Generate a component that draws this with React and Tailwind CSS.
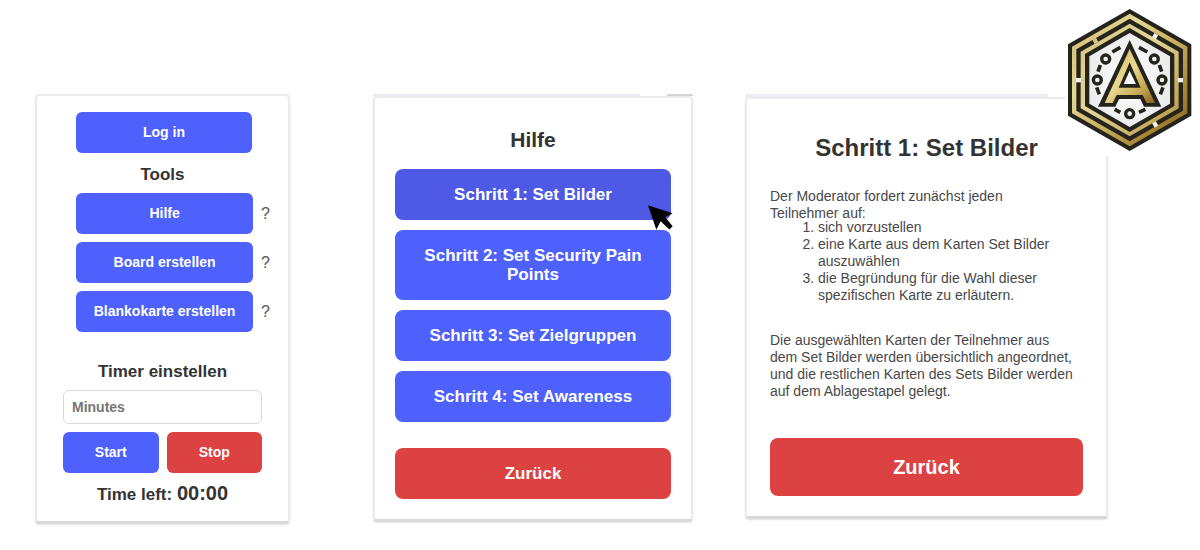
const steps = [
  "Schritt 1: Set Bilder",
  "Schritt 2: Set Security Pain Points",
  "Schritt 3: Set Zielgruppen",
  "Schritt 4: Set Awareness",
];

const tools = ["Hilfe", "Board erstellen", "Blankokarte erstellen"];

function Card({ className, children }) {
  return (
    <section className={`rounded-sm border-2 border-b-[3px] border-[#ebebeb] border-b-[#d9d9d9] bg-white shadow-[0_1px_2px_#e2e2e2] ${className}`}>
      {children}
    </section>
  );
}

function Logo() {
  return (
    <svg viewBox="45 0 405 468" className="absolute top-0 right-0 h-[156px] w-[135px] bg-white" role="img" aria-label="Logo">
      <defs>
        <linearGradient id="gold" x1="0" y1="0" x2="1" y2="1">
          <stop offset="0" stopColor="#c9b36a" />
          <stop offset="0.3" stopColor="#e6d795" />
          <stop offset="0.55" stopColor="#c8b160" />
          <stop offset="0.8" stopColor="#a5812f" />
          <stop offset="1" stopColor="#7d5a1c" />
        </linearGradient>
        <linearGradient id="goldInner" x1="0" y1="0" x2="1" y2="1">
          <stop offset="0" stopColor="#d8c67d" />
          <stop offset="0.45" stopColor="#e3d596" />
          <stop offset="1" stopColor="#b4933f" />
        </linearGradient>
        <linearGradient id="letter" x1="0" y1="0" x2="1" y2="1">
          <stop offset="0" stopColor="#c6ac55" />
          <stop offset="0.45" stopColor="#ead98f" />
          <stop offset="0.75" stopColor="#c4a651" />
          <stop offset="1" stopColor="#85601f" />
        </linearGradient>
        <radialGradient id="plate">
          <stop offset="0" stopColor="#ffffff" />
          <stop offset="1" stopColor="#ececee" />
        </radialGradient>
      </defs>
      {/* nested rings, outside to inside */}
      <polygon points="239,27 424,133 424,347 239,453 54,347 54,133" fill="#25241c" />
      <polygon points="239,41 412,140 412,340 239,439 66,340 66,140" fill="url(#gold)" />
      <polygon points="239,56 399,148 399,332 239,424 79,332 79,148" fill="#25241c" />
      <polygon points="239,71 386,155 386,325 239,409 92,325 92,155" fill="url(#goldInner)" />
      <polygon points="239,84 373,162 373,318 239,396 105,318 105,162" fill="#25241c" />
      <polygon points="239,99 360,169 360,311 239,381 118,311 118,169" fill="url(#plate)" />
      <g fill="#f1f1ee">
        <rect x="78" y="234" width="15" height="13" />
        <rect x="384" y="234" width="15" height="13" />
        <rect x="309" y="101" width="13" height="15" transform="rotate(30 315 108)" />
        <rect x="309" y="366" width="13" height="15" transform="rotate(-30 315 373)" />
        <rect x="129" y="114" width="13" height="16" fill="#d9bd84" transform="rotate(-30 135 122)" />
      </g>
      <g fill="none" stroke="#25241c" strokeWidth="10">
        <circle cx="167" cy="177" r="12" />
        <circle cx="313" cy="177" r="12" />
        <circle cx="142" cy="240" r="12" />
        <circle cx="336" cy="240" r="12" />
        <circle cx="239" cy="341" r="12" />
        <path d="M187 156L211 142M267 142L292 156M151 195L144 215M328 195L335 215M140 262L148 283M339 262L331 283M194 328L211 337M267 337L286 328" strokeWidth="11" />
      </g>
      <path d="M239 120L144 320H196L207 297H271L282 320H334Z" fill="#25241c" />
      <path d="M239 147L164 309H188L200 285H278L290 309H315ZM239 187L272 263H206Z" fill="url(#letter)" fillRule="evenodd" />
      <path d="M239 212L258 252H221Z" fill="#f7f7f7" />
    </svg>
  );
}

function ToolsPanel() {
  return (
    <Card className="mt-[94px] pt-4 pb-[14px]">
      <div className="pr-9 pl-[39px]">
        <button className="h-[41px] w-full rounded-md bg-[#4e61fc] text-[14px] font-bold text-white">Log in</button>
      </div>
      <h2 className="mt-3 text-center text-[17px] leading-5 font-bold">Tools</h2>
      <div className="mt-2 flex flex-col gap-2 pr-[18px] pl-[39px]">
        {tools.map((tool) => (
          <div key={tool} className="flex items-center gap-2">
            <button className="h-[41px] flex-1 rounded-md bg-[#4e61fc] text-[14px] font-bold text-white">{tool}</button>
            <a href="#" aria-label={`Info: ${tool}`} className="text-[16px] text-[#555]">?</a>
          </div>
        ))}
      </div>
      <div className="px-[26px]">
        <h2 className="mt-[30px] text-center text-[17px] leading-5 font-bold">Timer einstellen</h2>
        <input
          type="text"
          aria-label="Minutes"
          placeholder="Minutes"
          className="mt-2 block h-[34px] w-full rounded-md border border-[#d9d9d9] px-2 text-[14px] font-bold placeholder:text-[#757575]"
        />
        <div className="mt-2 grid grid-cols-2 gap-2">
          <button className="h-[41px] rounded-md bg-[#4e61fc] text-[14px] font-bold text-white">Start</button>
          <button className="h-[41px] rounded-md bg-[#dc4242] text-[14px] font-bold text-white">Stop</button>
        </div>
        <p className="mt-2 text-center text-[17px] leading-6 font-bold">
          Time left: <span className="text-[20px]">00:00</span>
        </p>
      </div>
    </Card>
  );
}

function HelpPanel() {
  return (
    <div className="col-start-3 mt-[94px]">
      <div className="flex h-0.5 justify-between">
        <div className="w-5/6 bg-[#ebebf3]" />
        <div className="w-[26px] bg-[#d4d4d4]" />
      </div>
      <Card className="px-5 pt-[30px] pb-5">
        <h2 className="text-center text-[21px] leading-6 font-bold">Hilfe</h2>
        <div className="mt-[17px] flex flex-col gap-2.5">
          {steps.map((step, i) => (
            <button
              key={step}
              className={`relative rounded-lg px-5 py-4 text-[17px] leading-[19px] font-bold text-white ${i === 0 ? "bg-[#4e5ae6]" : "bg-[#4e61fc]"}`}
            >
              {step}
              {i === 0 && (
                <svg viewBox="864 362 75 74" className="absolute -right-0.5 -bottom-2.5 h-[25px] w-[25px]" aria-hidden="true">
                  <path d="M864 362L938 386L916 398L938 425L928 435L902 410L889 436Z" fill="#000" />
                </svg>
              )}
            </button>
          ))}
        </div>
        <button className="mt-[26px] w-full rounded-lg bg-[#dc4242] py-4 text-[17px] leading-[19px] font-bold text-white">Zurück</button>
      </Card>
    </div>
  );
}

function StepPanel() {
  return (
    <div className="col-start-5 mt-[94px]">
      <div className="h-[3px] w-5/6 bg-[#ebeef6]" />
      <Card className="px-[23px] pt-[35px] pb-5">
        <h1 className="text-center text-[24px] leading-7 font-bold">Schritt 1: Set Bilder</h1>
        <div className="mt-[26px] text-[14px] leading-[17px] text-[#484848]">
          <p>
            Der Moderator fordert zunächst jeden
            <br />
            Teilnehmer auf:
          </p>
          <ol className="-mt-[3px] list-decimal pl-12">
            <li>sich vorzustellen</li>
            <li>
              eine Karte aus dem Karten Set Bilder
              <br />
              auszuwählen
            </li>
            <li>
              die Begründung für die Wahl dieser
              <br />
              spezifischen Karte zu erläutern.
            </li>
          </ol>
          <p className="mt-7">
            Die ausgewählten Karten der Teilnehmer aus
            <br />
            dem Set Bilder werden übersichtlich angeordnet,
            <br />
            und die restlichen Karten des Sets Bilder werden
            <br />
            auf dem Ablagestapel gelegt.
          </p>
        </div>
        <button className="mt-[38px] h-[58px] w-full rounded-lg bg-[#dc4242] text-[20px] font-bold text-white">Zurück</button>
      </Card>
    </div>
  );
}

export default function App() {
  return (
    <main className="relative grid min-h-screen grid-cols-[255fr_83px_320fr_52px_363fr] items-start bg-white pr-[92px] pl-[35px] font-['Liberation_Sans',Arial,sans-serif] text-[#333]">
      <ToolsPanel />
      <HelpPanel />
      <StepPanel />
      <Logo />
    </main>
  );
}
